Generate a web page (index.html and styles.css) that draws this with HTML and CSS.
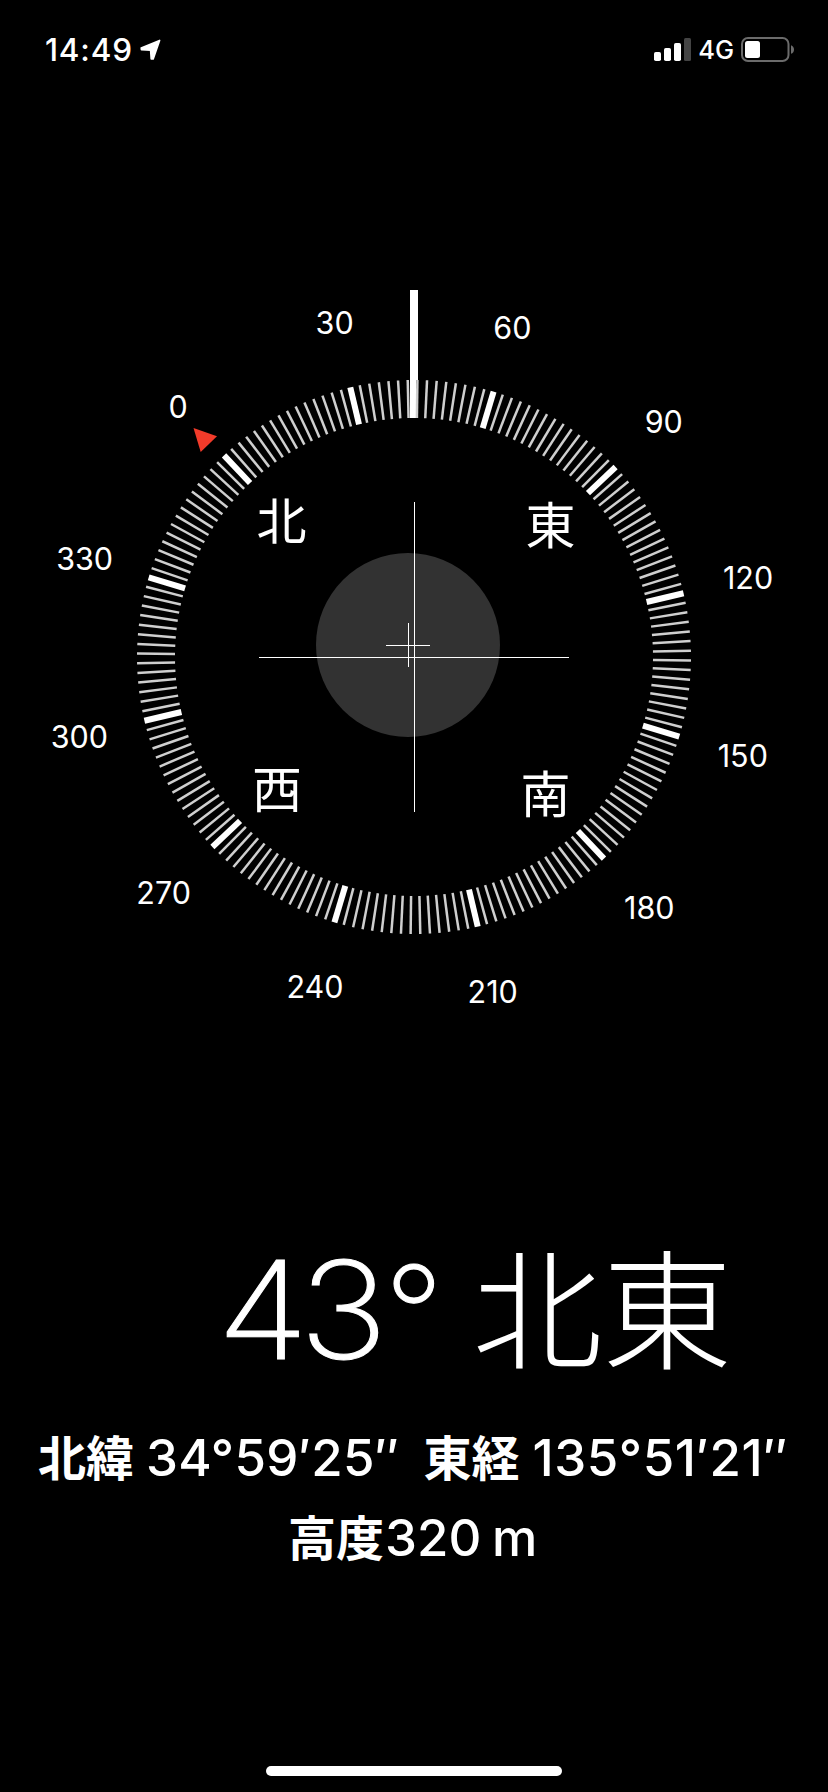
FILE: index.html
```
<!DOCTYPE html>
<html lang="ja">
<head>
    <meta charset="UTF-8">
    <meta name="viewport" content="width=device-width, initial-scale=1.0">
    <title>コンパス</title>
    <link rel="stylesheet" href="styles.css">
</head>
<body>
    <div class="screen">
        <header class="status-bar">
            <div class="status-left">
                <span class="time">14:49</span>
                <svg class="location" width="22" height="22" viewBox="0 0 22 22">
                    <path d="M19.6 1.4 L13.2 20 L11.2 20 L10.6 11.2 L1.4 10.6 L1.2 9 Z"/>
                </svg>
            </div>
            <div class="status-right">
                <svg class="signal" width="37" height="23" viewBox="0 0 37 23">
                    <rect x="0" y="14" width="7" height="9" rx="1.8"/>
                    <rect x="10" y="10" width="7" height="13" rx="1.8"/>
                    <rect x="20" y="5" width="7" height="18" rx="1.8"/>
                    <rect class="signal-off" x="30" y="0" width="7" height="23" rx="1.5"/>
                </svg>
                <span class="network">4G</span>
                <svg class="battery" width="54" height="25" viewBox="0 0 54 25">
                    <rect class="battery-case" x="1" y="1" width="46.5" height="23" rx="6"/>
                    <rect class="battery-level" x="4" y="4" width="15" height="17" rx="2.5"/>
                    <path class="battery-tip" d="M50 8.2 C54 9.5 54 15.5 50 16.8 Z"/>
                </svg>
            </div>
        </header>

        <main>
            <svg class="compass" width="828" height="760" viewBox="0 280 828 760">
                <rect class="needle" x="410" y="290" width="8" height="90"/>
                <rect class="needle" x="410" y="380" width="6" height="38"/>
                <g id="ticks" transform="translate(414 657) rotate(-43.3)"></g>
                <polygon class="north-mark" points="193.5,428 217,436.3 200.7,452"/>
                <g id="degrees"></g>
                <g class="directions">
                    <text x="281.5" y="539.5">北</text>
                    <text x="550.5" y="544">東</text>
                    <text x="545.5" y="812.5">南</text>
                    <text x="277" y="808">西</text>
                </g>
                <circle class="level" cx="408" cy="645" r="92"/>
                <path class="cross" d="M414.5 502 V812 M259 657.5 H569"/>
                <path class="cross" d="M408.5 623 V667 M386 645.5 H430"/>
            </svg>

            <h1 class="heading"><span class="heading-num">43</span><span class="heading-deg">°</span><span class="heading-dir">北東</span></h1>

            <div class="info">
                <p class="coords">
                    <span class="kanji">北緯</span><span class="value lat">34°59′25″</span><span class="kanji">東経</span><span class="value lon">135°51′21″</span>
                </p>
                <p class="altitude"><span class="kanji">高度</span><span class="value">320 m</span></p>
            </div>
        </main>

        <div class="home-indicator"></div>
    </div>

    <script>
        const svgNS = 'http://www.w3.org/2000/svg';
        const heading = 43.3;
        const ticks = document.getElementById('ticks');
        const degrees = document.getElementById('degrees');

        for (let deg = 0; deg < 360; deg += 2) {
            const line = document.createElementNS(svgNS, 'line');
            line.setAttribute('y1', -277);
            line.setAttribute('y2', -239);
            line.setAttribute('transform', 'rotate(' + deg + ')');
            line.setAttribute('class', deg % 30 === 0 ? 'tick major' : 'tick');
            ticks.appendChild(line);
        }

        // numbers stay upright around the dial
        for (let deg = 0; deg < 360; deg += 30) {
            const angle = (deg - heading) * Math.PI / 180;
            const text = document.createElementNS(svgNS, 'text');
            text.setAttribute('x', 413.7 + 343.6 * Math.sin(angle));
            text.setAttribute('y', 668.5 - 343.6 * Math.cos(angle));
            text.setAttribute('class', 'degree');
            text.textContent = deg;
            degrees.appendChild(text);
        }
    </script>
</body>
</html>
```

FILE: styles.css
```
body {
    margin: 0;
    background-color: #000;
    color: #fff;
    font-family: Inter, "Noto Sans CJK JP", sans-serif;
}
.screen {
    width: 828px;
    height: 1792px;
    display: flex;
    flex-direction: column;
    overflow: hidden;
}
.status-bar {
    height: 100px;
    flex: none;
    box-sizing: border-box;
    padding: 0 33px 1px 45px;
    display: flex;
    justify-content: space-between;
    align-items: center;
}
.status-left, .status-right {
    display: flex;
    align-items: center;
}
.time {
    font-size: 31.5px;
    font-weight: 500;
    letter-spacing: 0.8px;
}
.location {
    margin-left: 7px;
    fill: #fff;
    stroke: #fff;
    stroke-width: 1.6;
    stroke-linejoin: round;
}
.signal {
    fill: #fff;
}
.signal-off {
    fill: #444;
}
.network {
    margin: 0 7px;
    font-size: 25.5px;
    font-weight: 500;
}
.battery-case {
    fill: none;
    stroke: #6b6b6b;
    stroke-width: 2;
}
.battery-level {
    fill: #fff;
}
.battery-tip {
    fill: #6b6b6b;
}
main {
    flex: 1;
    padding-top: 180px;
}
.compass {
    display: block;
}
.needle {
    fill: #fff;
}
.tick {
    stroke: #cfcfcf;
    stroke-width: 2.5;
}
.tick.major {
    stroke: #fff;
    stroke-width: 6;
}
.north-mark {
    fill: #f23b2a;
}
.degree {
    fill: #fff;
    font-size: 30.5px;
    text-anchor: middle;
}
.directions {
    fill: #fff;
    font-family: "Noto Sans CJK JP", sans-serif;
    font-size: 50px;
    font-weight: 400;
    text-anchor: middle;
}
.level {
    fill: #323232;
}
.cross {
    fill: none;
    stroke: #fff;
    stroke-width: 1;
    shape-rendering: crispEdges;
}
.heading {
    margin: 190px 0 0;
    padding-left: 217px;
    height: 160px;
    display: flex;
    align-items: baseline;
    font-size: 136px;
    font-weight: 200;
    line-height: 160px;
    white-space: nowrap;
}
.heading-num {
    letter-spacing: -8.7px;
    transform: scaleX(1.1);
    transform-origin: left;
    -webkit-text-stroke: 1px #fff;
}
.heading-deg {
    margin-left: 21px;
    font-size: 129px;
    line-height: 1;
    -webkit-text-stroke: 1px #fff;
}
.heading-dir {
    margin-left: 29px;
    font-family: "Noto Sans CJK JP", sans-serif;
    font-size: 130px;
    font-weight: 300;
    line-height: 1;
}
.info {
    padding-top: 25px;
    font-size: 51px;
    font-weight: 500;
}
.info p {
    margin: 0;
    height: 80px;
    display: flex;
    align-items: baseline;
    line-height: 80px;
    white-space: nowrap;
}
.coords {
    padding-left: 38px;
}
.altitude {
    padding-left: 288px;
}
.kanji {
    font-family: "Noto Sans CJK JP", sans-serif;
    font-size: 48px;
    font-weight: 700;
}
.coords .value {
    margin-left: 12px;
    letter-spacing: 0.3px;
}
.coords .lon {
    margin-left: 13px;
    letter-spacing: 0.6px;
}
.lat {
    margin-right: 24px;
}
.altitude .value {
    margin-left: 1px;
    word-spacing: -3px;
}
.home-indicator {
    flex: none;
    align-self: center;
    width: 296px;
    height: 10px;
    margin-bottom: 16px;
    border-radius: 5px;
    background-color: #fff;
}
```
